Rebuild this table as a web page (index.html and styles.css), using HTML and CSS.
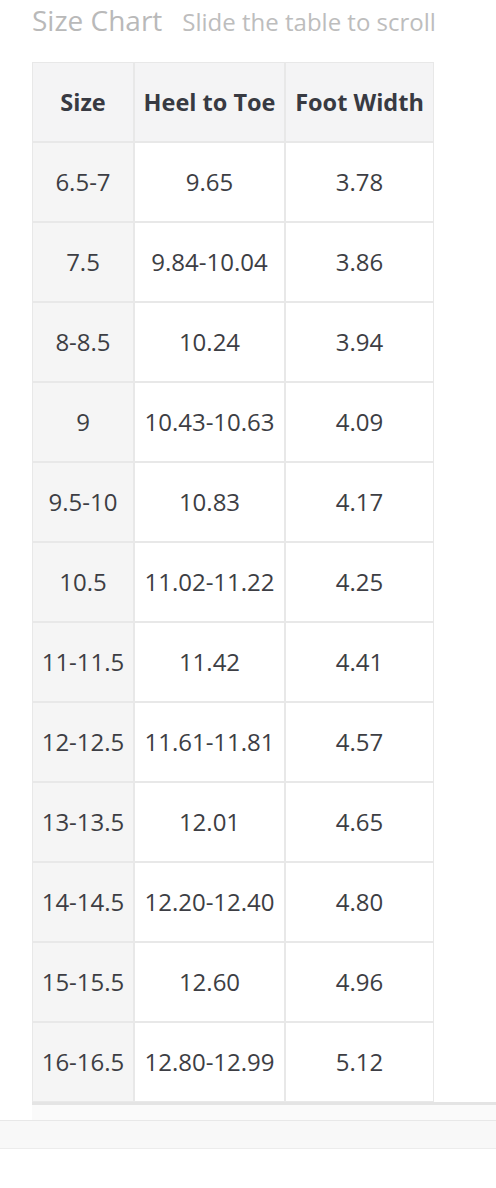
FILE: index.html
```html
<!DOCTYPE html>
<html>
<head>
<meta charset="utf-8">
<link rel="stylesheet" href="styles.css">
</head>
<body>
<div class="chart">
  <div class="title-row">
    <span class="title">Size Chart</span>
    <span class="hint">Slide the table to scroll</span>
  </div>
  <div class="scroller">
    <table class="sizes">
      <colgroup><col class="c1"><col class="c2"><col class="c3"></colgroup>
      <thead>
        <tr><th>Size</th><th>Heel to Toe</th><th>Foot Width</th></tr>
      </thead>
      <tbody>
        <tr><td class="first">6.5-7</td><td>9.65</td><td>3.78</td></tr>
        <tr><td class="first">7.5</td><td>9.84-10.04</td><td>3.86</td></tr>
        <tr><td class="first">8-8.5</td><td>10.24</td><td>3.94</td></tr>
        <tr><td class="first">9</td><td>10.43-10.63</td><td>4.09</td></tr>
        <tr><td class="first">9.5-10</td><td>10.83</td><td>4.17</td></tr>
        <tr><td class="first">10.5</td><td>11.02-11.22</td><td>4.25</td></tr>
        <tr><td class="first">11-11.5</td><td>11.42</td><td>4.41</td></tr>
        <tr><td class="first">12-12.5</td><td>11.61-11.81</td><td>4.57</td></tr>
        <tr><td class="first">13-13.5</td><td>12.01</td><td>4.65</td></tr>
        <tr><td class="first">14-14.5</td><td>12.20-12.40</td><td>4.80</td></tr>
        <tr><td class="first">15-15.5</td><td>12.60</td><td>4.96</td></tr>
        <tr><td class="first">16-16.5</td><td>12.80-12.99</td><td>5.12</td></tr>
      </tbody>
    </table>
  </div>
  <div class="track"></div>
</div>
<div class="band"></div>
</body>
</html>
```
FILE: styles.css
```css
html, body {
  margin: 0;
  padding: 0;
  background: #fff;
  font-family: "Open Sans", "Liberation Sans", sans-serif;
}
.chart {
  padding-left: 32px;
}
.title-row {
  display: flex;
  align-items: baseline;
  gap: 20px;
  height: 62px;
  box-sizing: border-box;
}
.title {
  font-size: 28px;
  line-height: 40px;
  color: #b9b9b9;
}
.hint {
  font-size: 24px;
  color: #bdbdbd;
}
.scroller {
  border-bottom: 3px solid #e4e4e4;
}
.sizes {
  border-collapse: separate;
  border-spacing: 0;
  table-layout: fixed;
  width: 402px;
}
.c1 { width: 102px; }
.c2 { width: 151px; }
.c3 { width: 149px; }
.sizes th, .sizes td {
  border: 1px solid #e8e8e8;
  padding: 27px 0;
  line-height: 24px;
  text-align: center;
  font-size: 24px;
  color: #3d3e44;
  white-space: nowrap;
  overflow: visible;
}
.sizes th {
  background: #f4f4f5;
  font-weight: 700;
  font-size: 23.5px;
  color: #383a42;
}
.sizes td.first {
  background: #f5f5f5;
}
.track {
  height: 15px;
  background: #fafafa;
}
.band {
  height: 27px;
  background: #f8f8f8;
  border-top: 1px solid #e8e8e8;
  border-bottom: 1px solid #ececec;
}
```
